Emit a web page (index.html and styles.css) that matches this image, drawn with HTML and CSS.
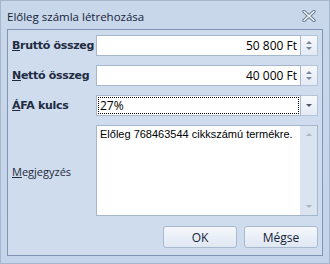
FILE: index.html
```html
<!DOCTYPE html>
<html lang="hu">
<head>
  <meta charset="UTF-8">
  <title>Előleg számla létrehozása</title>
  <link rel="stylesheet" href="styles.css">
</head>
<body>
  <div class="window">
    <div class="titlebar">
      <span class="title">Előleg számla létrehozása</span>
      <svg class="close" width="14" height="12" viewBox="0 0 14 12">
        <path d="M2 1.5 L12 10.5 M12 1.5 L2 10.5" stroke="#6d7d94" stroke-width="3.4" stroke-linecap="round"/>
        <path d="M2 1.5 L12 10.5 M12 1.5 L2 10.5" stroke="#f4f7fb" stroke-width="1.4" stroke-linecap="round"/>
      </svg>
    </div>

    <div class="panel">
      <div class="form">
        <label class="label"><u>B</u>ruttó összeg</label>
        <div class="field">
          <div class="edit num">50 800 Ft</div>
          <div class="spin">
            <span class="arrow up"></span>
            <span class="arrow down"></span>
          </div>
        </div>

        <label class="label"><u>N</u>ettó összeg</label>
        <div class="field">
          <div class="edit num">40 000 Ft</div>
          <div class="spin">
            <span class="arrow up"></span>
            <span class="arrow down"></span>
          </div>
        </div>

        <label class="label"><u>Á</u>FA kulcs</label>
        <div class="field">
          <div class="edit combo"><span class="focus">27%</span></div>
          <div class="drop"><span class="arrow down dark"></span></div>
        </div>

        <label class="label note-label"><u>M</u>egjegyzés</label>
        <div class="memo">
          <div class="memo-text">Előleg 768463544 cikkszámú termékre.</div>
          <div class="scrollbar">
            <span class="arrow up pale"></span>
            <span class="arrow down pale"></span>
          </div>
        </div>
      </div>

      <div class="buttons">
        <button class="btn">OK</button>
        <button class="btn">Mégse</button>
      </div>
    </div>
  </div>
</body>
</html>
```

FILE: styles.css
```css
html, body {
  margin: 0;
  padding: 0;
}
body {
  width: 330px;
  height: 264px;
  overflow: hidden;
  font-family: "Open Sans", "Liberation Sans", Arial, sans-serif;
  font-size: 11px;
  color: #000;
}
.window {
  width: 330px;
  height: 264px;
  box-sizing: border-box;
  background: linear-gradient(to bottom, #c9d7ea, #c4d4ea);
  border: 1px solid #a5b6cd;
  padding: 0 6px 6px 6px;
}
.titlebar {
  height: 28px;
  display: flex;
  align-items: center;
  justify-content: space-between;
  padding: 0 7px 0 0;
}
.title {
  font-size: 11.5px;
  color: #15233a;
  margin-top: 2px;
}
.close {
  margin-top: 2px;
}
.panel {
  background: #cfdcee;
  border: 1px solid #8195b3;
  height: 227px;
  box-sizing: border-box;
  padding: 5px 4px 0 4px;
  display: flex;
  flex-direction: column;
}
.form {
  display: grid;
  grid-template-columns: 84px 1fr;
  grid-template-rows: 21px 21px 21px 91px;
  row-gap: 9px;
}
.label {
  align-self: center;
  font-family: "DejaVu Sans", sans-serif;
  font-weight: bold;
  font-size: 11px;
  color: #1e2b40;
  letter-spacing: -0.3px;
}
.note-label {
  font-family: "Open Sans", "Liberation Sans", sans-serif;
  font-weight: normal;
  letter-spacing: 0;
  margin-top: 2px;
}
.field {
  display: flex;
}
.edit {
  flex: 1;
  background: #fff;
  border: 1px solid #a6b6cc;
  display: flex;
  align-items: center;
  padding: 0 3px;
  font-size: 12px;
}
.num {
  justify-content: flex-end;
}
.combo {
  padding: 1px;
}
.focus {
  flex: 1;
  align-self: stretch;
  display: flex;
  align-items: center;
  border: 1px dotted #000;
  padding-left: 1px;
}
.spin, .drop {
  width: 16px;
  border: 1px solid #b4c4d9;
  border-left: none;
  background: linear-gradient(to bottom, #f7f9fc, #e3eaf4);
  display: flex;
  flex-direction: column;
  align-items: center;
  justify-content: center;
  gap: 3px;
}
.arrow {
  width: 0;
  height: 0;
  border-left: 3px solid transparent;
  border-right: 3px solid transparent;
}
.arrow.up {
  border-bottom: 3px solid #7a8597;
}
.arrow.down {
  border-top: 3px solid #7a8597;
}
.arrow.dark {
  border-top-color: #4d5566;
}
.arrow.pale.up {
  border-bottom-color: #aab6c8;
}
.arrow.pale.down {
  border-top-color: #aab6c8;
}
.memo {
  display: flex;
  background: #fff;
  border: 1px solid #a6b6cc;
}
.memo-text {
  flex: 1;
  padding: 2px 3px;
  font-family: "Liberation Sans", Arial, sans-serif;
  font-size: 11px;
  white-space: nowrap;
  overflow: hidden;
}
.scrollbar {
  width: 17px;
  background: #dae4f1;
  display: flex;
  flex-direction: column;
  justify-content: space-between;
  align-items: center;
  padding: 7px 0;
}
.buttons {
  display: flex;
  justify-content: flex-end;
  gap: 7px;
  margin-top: 10px;
}
.btn {
  width: 74px;
  height: 22px;
  border: 1px solid #a9b9cf;
  border-radius: 3px;
  background: linear-gradient(to bottom, #f5f8fc, #dfe7f2);
  font-family: "Open Sans", "Liberation Sans", sans-serif;
  font-size: 12px;
  color: #15233a;
  padding: 0;
}
```
